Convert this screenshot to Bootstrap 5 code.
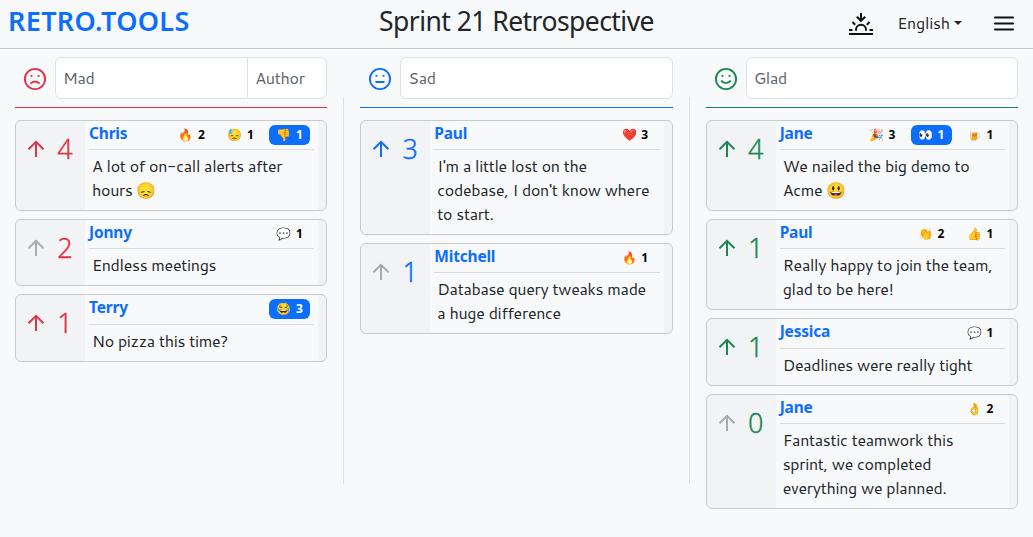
<!DOCTYPE html>
<html lang="en">
<head>
<meta charset="utf-8">
<meta name="viewport" content="width=device-width, initial-scale=1">
<title>Sprint 21 Retrospective</title>
<link href="https://cdn.jsdelivr.net/npm/bootstrap@5.3.0/dist/css/bootstrap.min.css" rel="stylesheet">
<style>
body{font-family:Cantarell,"Noto Sans","Noto Color Emoji",sans-serif;letter-spacing:-.3px;background:#f8f9fb;color:#212529;height:537px;overflow:hidden}
.brand,.board-title,.name,.react,.count{font-family:"Noto Sans","Noto Color Emoji",sans-serif}
.topbar{height:49px;border-bottom:1px solid #c3c5c8;position:relative}
.brand{font-size:27px;font-weight:600;line-height:42px;letter-spacing:.35px;color:#0d6efd;margin-left:8px}
.board-title{position:absolute;left:0;right:0;top:0;text-align:center;font-size:26.5px;line-height:42px;letter-spacing:-.55px;font-weight:400;margin:0}
.tools{position:relative;margin-left:auto;padding-right:18px}
.sunset{width:28px;height:28px;margin-right:23px}
.lang{margin:-2px 0 0 -1px;letter-spacing:-.2px}
.menu{width:22px;height:18px;margin-left:31px}
.board{padding:8px 15px 0}
.lane{flex:1 1 0;min-width:0}
.divider{width:1px;margin:40px 16px 0;height:387px;background:#dee0e3}
.mad{--tone:#dc3545}.sad{--tone:#0d6efd}.glad{--tone:#198754}
.entry{height:42px;margin-bottom:8px}
.face{flex:none;width:24px;height:24px;margin:2px 8px 0;color:var(--tone)}
.entry .form-control{font-size:16px;letter-spacing:-.27px;padding:0 7px 2px;border-color:#dee2e6;height:42px}
.entry .form-control::placeholder{color:#5c6268;opacity:1}
.entry .author{flex:0 0 80px}
.rule{height:1px;background:var(--tone);margin-bottom:12px}
.note{border:1px solid #c8cacd;border-radius:6px;background:#f2f3f5;margin-bottom:8px;padding-right:8px;overflow:hidden}
.votes{flex:0 0 69px;color:var(--tone)}
.votes svg{flex:none;width:24px;height:24px;margin:16px 0 0 8px}
.votes .off{color:#a8aaac}
.count{font-size:27px;font-weight:300;-webkit-text-stroke:.35px currentColor;line-height:34px;width:18px;margin:11px 0 0 8px;text-align:center;letter-spacing:0}
.content{background:#f8f9fb;padding:0 4px;min-width:0}
.note-head{height:29.2px;border-bottom:1px solid #d9dbde}
.name{font-size:15.5px;font-weight:700;color:#0d6efd;line-height:24px;letter-spacing:-.2px}
.reacts{gap:8px;padding:4px 4px 0 0}
.react{width:41px;height:20px;border-radius:6px;font-size:12px;line-height:20px;font-weight:700;color:#000;text-align:center;white-space:pre;letter-spacing:0;word-spacing:1px}
.react.on{background:#0d6efd;color:#fff}
.words{padding:4px 4px 8px 3px;font-size:16px;line-height:24px;white-space:nowrap}
</style>
</head>
<body>
<svg class="d-none"><defs>
<symbol id="up" viewBox="0 0 24 24"><path d="M12 20V5M4.500 12.300 12 4.900 19.500 12.300" fill="none" stroke="currentColor" stroke-width="2"/></symbol>
</defs></svg>
<header class="topbar d-flex">
<div class="brand">RETRO.TOOLS</div><h1 class="board-title">Sprint 21 Retrospective</h1>
<div class="tools d-flex align-items-center">
<svg class="sunset" viewBox="0 0 28 28" fill="none" stroke="#111" stroke-width="2"><path d="M2 24h24M2 20h3.500M22.500 20H26M9 20.800v-1a5 5 0 0 1 10 0v1M14 3v8M9.800 6.700 14 10.800l4.200-4.100M5.500 12l2.700 2.700M22.500 12 19.800 14.700"/></svg>
<span class="lang dropdown-toggle">English</span>
<svg class="menu" viewBox="0 0 22 18" stroke="#111" stroke-width="2" stroke-linecap="round"><path d="M2 2.500h18M2 8.500h18M2 14.500h18"/></svg>
</div>
</header>
<main class="board d-flex">
<section class="lane mad">
<div class="entry d-flex align-items-center"><svg class="face" viewBox="0 0 24 24" fill="none" stroke="currentColor" stroke-width="1.900"><circle cx="12" cy="12" r="10.100"/><path d="M7.500 8.900h1.900M14.600 8.900h1.900"/><path d="M7.500 16.600c2.300-2.900 6.700-2.900 9 0"/></svg><div class="input-group"><input class="form-control" placeholder="Mad"><input class="form-control author" placeholder="Author"></div></div>
<div class="rule"></div>
<article class="note d-flex"><div class="votes d-flex"><svg><use href="#up"/></svg><span class="count">4</span></div><div class="content flex-fill"><div class="note-head d-flex justify-content-between"><span class="name">Chris</span><div class="reacts d-flex"><span class="react">🔥 2</span><span class="react">😓 1</span><span class="react on">👎 1</span></div></div><div class="words">A lot of on-call alerts after<br>hours 😞</div></div></article>
<article class="note d-flex"><div class="votes d-flex"><svg class="off"><use href="#up"/></svg><span class="count">2</span></div><div class="content flex-fill"><div class="note-head d-flex justify-content-between"><span class="name">Jonny</span><div class="reacts d-flex"><span class="react">💬 1</span></div></div><div class="words">Endless meetings</div></div></article>
<article class="note d-flex"><div class="votes d-flex"><svg><use href="#up"/></svg><span class="count">1</span></div><div class="content flex-fill"><div class="note-head d-flex justify-content-between"><span class="name">Terry</span><div class="reacts d-flex"><span class="react on">😂 3</span></div></div><div class="words">No pizza this time?</div></div></article>
</section>
<div class="divider"></div>
<section class="lane sad">
<div class="entry d-flex align-items-center"><svg class="face" viewBox="0 0 24 24" fill="none" stroke="currentColor" stroke-width="1.900"><circle cx="12" cy="12" r="10.100"/><path d="M7.500 8.900h1.900M14.600 8.900h1.900M7.500 15h9"/></svg><div class="input-group"><input class="form-control" placeholder="Sad"></div></div>
<div class="rule"></div>
<article class="note d-flex"><div class="votes d-flex"><svg><use href="#up"/></svg><span class="count">3</span></div><div class="content flex-fill"><div class="note-head d-flex justify-content-between"><span class="name">Paul</span><div class="reacts d-flex"><span class="react">❤️ 3</span></div></div><div class="words">I'm a little lost on the<br>codebase, I don't know where<br>to start.</div></div></article>
<article class="note d-flex"><div class="votes d-flex"><svg class="off"><use href="#up"/></svg><span class="count">1</span></div><div class="content flex-fill"><div class="note-head d-flex justify-content-between"><span class="name">Mitchell</span><div class="reacts d-flex"><span class="react">🔥 1</span></div></div><div class="words">Database query tweaks made<br>a huge difference</div></div></article>
</section>
<div class="divider"></div>
<section class="lane glad">
<div class="entry d-flex align-items-center"><svg class="face" viewBox="0 0 24 24" fill="none" stroke="currentColor" stroke-width="1.900"><circle cx="12" cy="12" r="10.100"/><path d="M7.500 8.900h1.900M14.600 8.900h1.900"/><path d="M7.300 13.600c2.300 3.300 7.100 3.300 9.400 0"/></svg><div class="input-group"><input class="form-control" placeholder="Glad"></div></div>
<div class="rule"></div>
<article class="note d-flex"><div class="votes d-flex"><svg><use href="#up"/></svg><span class="count">4</span></div><div class="content flex-fill"><div class="note-head d-flex justify-content-between"><span class="name">Jane</span><div class="reacts d-flex"><span class="react">🎉 3</span><span class="react on">👀 1</span><span class="react">🍺 1</span></div></div><div class="words">We nailed the big demo to<br>Acme 😃</div></div></article>
<article class="note d-flex"><div class="votes d-flex"><svg><use href="#up"/></svg><span class="count">1</span></div><div class="content flex-fill"><div class="note-head d-flex justify-content-between"><span class="name">Paul</span><div class="reacts d-flex"><span class="react">👏 2</span><span class="react">👍 1</span></div></div><div class="words">Really happy to join the team,<br>glad to be here!</div></div></article>
<article class="note d-flex"><div class="votes d-flex"><svg><use href="#up"/></svg><span class="count">1</span></div><div class="content flex-fill"><div class="note-head d-flex justify-content-between"><span class="name">Jessica</span><div class="reacts d-flex"><span class="react">💬 1</span></div></div><div class="words">Deadlines were really tight</div></div></article>
<article class="note d-flex"><div class="votes d-flex"><svg class="off"><use href="#up"/></svg><span class="count">0</span></div><div class="content flex-fill"><div class="note-head d-flex justify-content-between"><span class="name">Jane</span><div class="reacts d-flex"><span class="react">👌 2</span></div></div><div class="words">Fantastic teamwork this<br>sprint, we completed<br>everything we planned.</div></div></article>
</section>
</main>
<script src="https://cdn.jsdelivr.net/npm/bootstrap@5.3.0/dist/js/bootstrap.bundle.min.js"></script>
</body></html>
